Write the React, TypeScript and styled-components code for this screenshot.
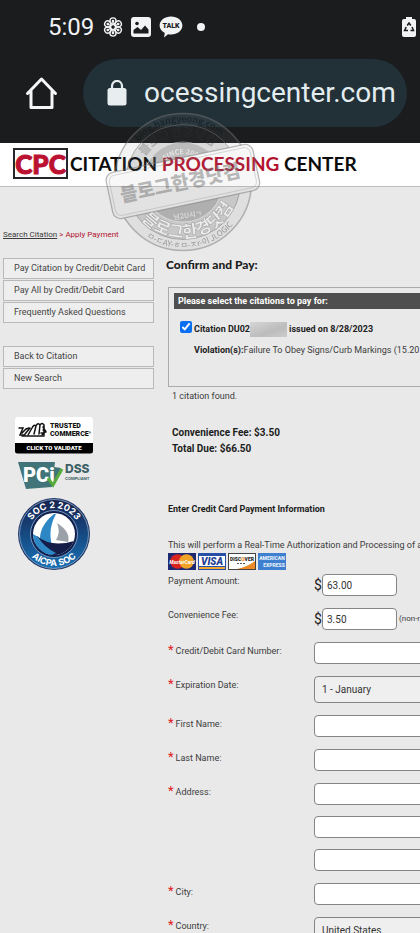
import React from "react";
import styled, { createGlobalStyle, css } from "styled-components";

const GlobalStyle = createGlobalStyle`
  *, *::before, *::after { box-sizing: border-box; }
  body {
    margin: 0;
    background: #e9e9e9;
    color: #3c3c3c;
    font-family: Roboto, "Noto Sans", sans-serif;
    font-size: 9px;
    line-height: 14px;
  }
`;

const Screen = styled.div`
  position: relative;
  height: 100vh;
  overflow: hidden;
`;

/* ---------- phone and browser bars ---------- */

const Chrome = styled.div`
  background: #1b1c1e;
  color: #f1f3f4;
`;

const StatusBar = styled.div`
  display: flex;
  align-items: center;
  height: 54px;
  padding: 0 4px 0 48px;
`;

const Clock = styled.time`
  margin-right: 9px;
  font-size: 24px;
  line-height: 28px;
`;

const StatusIcons = styled.div`
  display: flex;
  align-items: center;
  gap: 8px;
  flex: 1;
`;

const MoreDot = styled.span`
  width: 8px;
  height: 8px;
  margin-left: 6px;
  border-radius: 50%;
  background: #f1f3f4;
`;

const AddressRow = styled.div`
  display: flex;
  align-items: center;
  gap: 25px;
  padding: 5px 13px 16px 25px;
`;

const HomeButton = styled.button`
  display: flex;
  flex: none;
  padding: 0;
  border: 0;
  background: none;
`;

const AddressPill = styled.div`
  display: flex;
  align-items: center;
  flex: 1;
  min-width: 0;
  height: 68px;
  gap: 17px;
  padding-left: 24px;
  border-radius: 34px;
  background: #223038;
  overflow: hidden;
`;

const AddressText = styled.span`
  font-size: 28px;
  line-height: 36px;
  color: #e3edf0;
  white-space: nowrap;
`;

/* ---------- site header ---------- */

const SiteHeader = styled.header`
  display: flex;
  align-items: center;
  gap: 2px;
  height: 44px;
  padding: 0 0 2px 13px;
  border-bottom: 1px solid #bdbdbd;
  background: #fff;
`;

const LogoBox = styled.span`
  display: flex;
  align-items: center;
  justify-content: center;
  width: 55px;
  height: 31px;
  border: 2px solid #26262b;
  color: #bb1231;
  font: 900 26px/28px Lato, sans-serif;
  -webkit-text-stroke: 1px #bb1231;
`;

const Brand = styled.span`
  color: #0c0c0c;
  font: 700 19px/24px Lato, sans-serif;
  white-space: nowrap;
  em { font-style: normal; color: #b3122e; }
`;

/* ---------- page body ---------- */

const Breadcrumb = styled.nav`
  padding: 41px 0 15px 3px;
  font-size: 8px;
  color: #b3122e;
  a { color: #3c3c3c; }
`;

const Columns = styled.div`
  display: flex;
  align-items: flex-start;
  gap: 12px;
  padding-left: 3px;
`;

const Sidebar = styled.aside`
  flex: none;
  width: 151px;
  padding-top: 1px;
`;

const NavGroup = styled.nav`
  display: flex;
  flex-direction: column;
  gap: 1px;
  margin-bottom: 23px;
`;

const NavLink = styled.a`
  height: 21px;
  padding: 0 10px;
  border: 1px solid #b9b9b9;
  background: #eeeeee;
  color: #444;
  line-height: 19px;
  text-decoration: none;
  white-space: nowrap;
`;

const Badges = styled.div`
  display: flex;
  flex-direction: column;
  align-items: flex-start;
  gap: 7px;
  padding: 5px 0 0 11px;
  svg { display: block; }
`;

const Main = styled.main`
  flex: 1 0 420px;
`;

const Title = styled.h1`
  margin: 0 0 14px;
  color: #1c1c1c;
  font: 900 12px/16px Lato, sans-serif;
`;

const CitationBox = styled.section`
  height: 100px;
  margin-left: 2px;
  padding: 5px;
  border: 1px solid #ababab;
`;

const BoxHeading = styled.h2`
  margin: 0 0 12px;
  padding: 0 4px;
  background: #4f4f4f;
  color: #fff;
  font-size: 9px;
  line-height: 16px;
`;

const CitationLine = styled.label`
  display: flex;
  align-items: center;
  height: 16px;
  padding-left: 6px;
  color: #222;
  font-weight: 700;
  white-space: nowrap;
`;

const Tick = styled.input`
  width: 12px;
  height: 12px;
  margin: 0 2px 4px 0;
  accent-color: #0b6ff2;
`;

const Redacted = styled.span`
  width: 37px;
  height: 15px;
  margin-right: 2px;
  background: linear-gradient(160deg, #d6d6d6, #bcbcbc 60%, #cccccc);
`;

const Violation = styled.p`
  margin: 6px 0 0 20px;
  white-space: nowrap;
  b { color: #222; }
`;

const Found = styled.p`
  margin: 2px 0 0 6px;
`;

const Totals = styled.div`
  margin: 22px 0 0 6px;
  color: #1c1c1c;
  font-size: 10px;
  font-weight: 700;
  line-height: 16px;
`;

const Subtitle = styled.h2`
  margin: 45px 0 22px 2px;
  color: #1c1c1c;
  font-size: 9px;
  line-height: 14px;
`;

const Notice = styled.p`
  margin: 0 0 1px 2px;
  white-space: nowrap;
`;

const Cards = styled.div`
  display: flex;
  gap: 2px;
  height: 17px;
  margin: 0 0 4px 2px;
`;

const Form = styled.form`
  display: flex;
  flex-direction: column;
  gap: 12px;
  margin-left: 2px;
`;

const Row = styled.div`
  display: grid;
  grid-template-columns: 146px 1fr;
  align-items: start;
`;

const Label = styled.label<{ $required?: boolean }>`
  white-space: nowrap;
  ${(p) =>
    p.$required &&
    css`
      padding-top: 2px;
      &::before {
        content: "*";
        margin-right: 2px;
        color: #e02020;
        font-size: 13px;
        line-height: 12px;
      }
    `}
`;

const controlStyle = css`
  border: 1px solid #858585;
  border-radius: 4px;
  color: #333;
  font: 10px/14px Roboto, sans-serif;
`;

const Field = styled.input<{ $amount?: boolean }>`
  ${controlStyle}
  height: 22px;
  width: ${(p) => (p.$amount ? "75px" : "100%")};
  padding: 0 4px;
  background: #fff;
`;

const Select = styled.select`
  ${controlStyle}
  appearance: none;
  width: 100%;
  height: 27px;
  padding: 0 7px;
  background: #efefef;
`;

const Money = styled.div`
  display: flex;
  align-items: center;
  color: #222;
`;

const Dollar = styled.span`
  width: 8px;
  font-size: 14px;
  line-height: 20px;
`;

const Hint = styled.span`
  margin-left: 2px;
  font-size: 8px;
  color: #3c3c3c;
  white-space: nowrap;
`;

const Lines = styled.div`
  display: flex;
  flex-direction: column;
  gap: 11px;
`;

/* ---------- drawings ---------- */

const Stamp = styled.svg`
  position: absolute;
  left: 103px;
  top: 110px;
  pointer-events: none;
`;

const FlowerIcon = () => (
  <svg width="20" height="20" viewBox="-10 -10 20 20" fill="none" stroke="#f1f3f4" strokeWidth="1.4">
    {[0, 60, 120, 180, 240, 300].map((a) => (
      <g key={a} transform={`rotate(${a})`}>
        <circle cx="0" cy="-6" r="3.1" />
        <path d="M0 -2V-6" />
        <circle cx="0" cy="-6" r="0.6" />
      </g>
    ))}
    <circle r="2.4" />
  </svg>
);

const PictureIcon = () => (
  <svg width="20" height="20" viewBox="0 0 20 20">
    <rect width="20" height="20" rx="3" fill="#f1f3f4" />
    <circle cx="6" cy="6.5" r="1.8" fill="#1b1c1e" />
    <path d="M2.5 16.5V13l4-3 3.5 3L14 8.5l3.5 4v4z" fill="#1b1c1e" />
  </svg>
);

const TalkIcon = () => (
  <svg width="24" height="22" viewBox="0 0 24 22">
    <path d="M12 0.5c6.4 0 11.4 3.9 11.4 9s-5 9-11.4 9c-1 0-2-.1-3-.3L5 21.5l.8-4.5C2.6 15.4.6 12.7.6 9.5c0-5.1 5-9 11.4-9z" fill="#f1f3f4" />
    <text x="12" y="12" textAnchor="middle" fontFamily="Roboto, sans-serif" fontWeight="900" fontSize="7" fill="#1b1c1e">TALK</text>
  </svg>
);

const BatteryIcon = () => (
  <svg width="14" height="20" viewBox="0 0 14 20">
    <path d="M4 0h6v2h2a2 2 0 0 1 2 2v14a2 2 0 0 1-2 2H2a2 2 0 0 1-2-2V4a2 2 0 0 1 2-2h2z" fill="#f1f3f4" />
    <g fill="none" stroke="#1b1c1e" strokeWidth="1.5">
      <path d="M5.2 8.500L7 6l1.800 2.500" />
      <path d="M10 10l1.500 3.500H8.500" />
      <path d="M6 13.500H2.600L4.200 10" />
    </g>
  </svg>
);

const HomeIcon = () => (
  <svg width="33" height="34" viewBox="0 0 33 34" fill="none" stroke="#f4f6f7" strokeWidth="3">
    <path d="M2.500 17.500L16.500 3l14 14.500M6 15v16.500h21V15" strokeLinejoin="round" strokeLinecap="round" />
  </svg>
);

const LockIcon = () => (
  <svg width="20" height="26" viewBox="0 0 20 26">
    <rect x="0.5" y="8" width="19" height="17.5" rx="2.5" fill="#e8eef0" />
    <path d="M5 9V6a5 5 0 0 1 10 0v3" fill="none" stroke="#e8eef0" strokeWidth="2.2" />
  </svg>
);

const TrustedBadge = () => (
  <svg width="80" height="37" viewBox="0 0 80 37" role="img" aria-label="Trusted Commerce, click to validate">
    <rect x="1" width="78" height="36" rx="2.5" fill="#fff" />
    <path d="M1 26h78v8a2.500 2.500 0 0 1-2.500 2.500h-73A2.500 2.500 0 0 1 1 34z" fill="#000" />
    <g fill="none" stroke="#111" strokeWidth="1.5" strokeLinecap="round">
      <path d="M5 11h4l-3 7h5M8 16l4-4 3-1M11 17l5-6M14 18l4-7q2-4 4-2l-2 8M22 9q2-4 4-1l-1 9M26 8q2-3 4 0l0 7M29 10l3 5M27 16h3M28 18l3-3M29 13h1v5" />
      <path d="M8 19h22" strokeDasharray="2 1" />
    </g>
    <g fontFamily="Roboto, sans-serif" fontWeight="900">
      <text x="36" y="11" fontSize="7" fill="#111">TRUSTED</text>
      <text x="36" y="19" fontSize="7" fill="#111">COMMERCE<tspan fontSize="3" dy="-2">®</tspan></text>
      <text x="40" y="33" fontSize="6" fill="#fff" textAnchor="middle">CLICK TO VALIDATE</text>
    </g>
  </svg>
);

const PciBadge = () => (
  <svg width="80" height="29" viewBox="-2 0 80 29" role="img" aria-label="PCI DSS compliant">
    <path d="M2 1h37l-3 25-26 2z" fill="#407478" />
    <path d="M38 6l7 1-6 12-4 3z" fill="#407478" />
    <text x="7" y="21" fontFamily="Roboto, sans-serif" fontWeight="900" fontSize="20" fill="#fff">PCi</text>
    <path d="M32 17l5 7L46 8" fill="none" stroke="#56ab3c" strokeWidth="3" />
    <text x="49" y="12" fontFamily="Inter, sans-serif" fontWeight="800" fontSize="12" fill="#3d6266">DSS</text>
    <text x="49" y="19" fontFamily="Inter, sans-serif" fontWeight="700" fontSize="4" fill="#3d6266">COMPLIANT</text>
  </svg>
);

const SocBadge = () => (
  <svg width="80" height="74" viewBox="-40 -37 80 74" role="img" aria-label="SOC 2 2023 AICPA SOC">
    <defs>
      <linearGradient id="socRing" x1="0" y1="0" x2="0" y2="1">
        <stop offset="0" stopColor="#16224f" />
        <stop offset="1" stopColor="#1770b4" />
      </linearGradient>
      <path id="socTop" d="M-26 0A26 26 0 0 1 26 0" />
      <path id="socBottom" d="M-32 0A32 32 0 0 0 32 0" />
      <clipPath id="socDisc"><circle r="21" /></clipPath>
    </defs>
    <circle r="36" fill="#1c3566" />
    <circle r="34.5" fill="url(#socRing)" stroke="#9fb9d6" strokeWidth="0.7" />
    <circle r="23.5" fill="#10204e" stroke="#8fb0d0" strokeWidth="0.8" />
    <circle r="21" fill="#fff" />
    <g clipPath="url(#socDisc)">
      <path d="M0-20Q-15-8-14 7q5 8 14 10Q-8-2 2-20z" fill="#2d87c5" />
      <path d="M3-11Q17-2 14 8L2 6Q7-2 3-11z" fill="#9aa1a8" />
      <path d="M-17 2Q-3 14 20 7L18 24h-40z" fill="#141d47" />
      <path d="M-21 0l5 3Q-10 13 2 19l-10 5-13-8z" fill="#2d87c5" />
    </g>
    <g fontFamily="Inter, sans-serif" fontWeight="700" fontSize="9" fill="#fff" textAnchor="middle">
      <text><textPath href="#socTop" startOffset="50%">SOC 2 2023</textPath></text>
      <text><textPath href="#socBottom" startOffset="50%">AICPA SOC</textPath></text>
    </g>
  </svg>
);

const CardArt = ({ kind }: { kind: "mastercard" | "visa" | "discover" | "amex" }) => (
  <svg width="28" height="17" viewBox="0 0 28 17" role="img" aria-label={kind}>
    {kind === "mastercard" && (
      <>
        <rect width="28" height="17" fill="#1d2a72" />
        <circle cx="9.5" cy="8.5" r="7.3" fill="#d8241f" />
        <circle cx="18.5" cy="8.5" r="7.3" fill="#f2a227" />
        <text x="14" y="10.5" textAnchor="middle" fontFamily="Roboto, sans-serif" fontWeight="700" fontStyle="italic" fontSize="5" fill="#fff">MasterCard</text>
      </>
    )}
    {kind === "visa" && (
      <>
        <rect width="28" height="17" fill="#2a4fa6" />
        <rect x="1" y="3" width="26" height="10" fill="#fff" />
        <rect x="1" y="14" width="26" height="2" fill="#f0aa33" />
        <text x="14" y="12" textAnchor="middle" fontFamily="Roboto, sans-serif" fontWeight="900" fontStyle="italic" fontSize="10" fill="#1f3f94">VISA</text>
      </>
    )}
    {kind === "discover" && (
      <>
        <rect x="0.5" y="0.5" width="27" height="16" fill="#fff" stroke="#444" />
        <path d="M27 8Q19 14 9 16h18z" fill="#ee8a26" />
        <text x="14" y="8" textAnchor="middle" fontFamily="Roboto, sans-serif" fontWeight="900" fontSize="5" fill="#222">DISC<tspan fill="#ee8a26">O</tspan>VER</text>
        <path d="M9 10.500h9" stroke="#555" strokeDasharray="2 1" />
      </>
    )}
    {kind === "amex" && (
      <>
        <rect width="28" height="17" fill="#3f7fcf" />
        <g fontFamily="Roboto, sans-serif" fontWeight="900" fontSize="5" fill="#e3effb">
          <text x="14" y="7" textAnchor="middle">AMERICAN</text>
          <text x="16" y="14" textAnchor="middle">EXPRESS</text>
        </g>
      </>
    )}
  </svg>
);

const StampArt = () => (
  <Stamp width="160" height="146" viewBox="-80 -72 160 146" aria-hidden="true">
    <defs>
      <path id="arcTop" d="M-60 0A60 60 0 0 1 60 0" />
      <path id="arcInner" d="M-46 0A46 46 0 0 1 46 0" />
      <path id="arcSince" d="M-28 0A28 28 0 0 1 28 0" />
      <path id="arcName" d="M-56 0A56 56 0 0 0 56 0" />
      <path id="arcBottom" d="M-66 0A66 66 0 0 0 66 0" />
      <mask id="behindPlate">
        <rect x="-80" y="-80" width="160" height="160" fill="#fff" />
        <rect x="-75" y="-24" width="150" height="47" rx="8" fill="#000" transform="rotate(-12)" />
      </mask>
    </defs>
    <g mask="url(#behindPlate)" fontFamily='"Noto Sans CJK KR", sans-serif' textAnchor="middle">
      <circle r="68.5" fill="#8a8a8a" fillOpacity="0.1" stroke="#777" strokeOpacity="0.5" strokeWidth="1.5" />
      <circle r="57.5" fill="#000" fillOpacity="0.1" stroke="#777" strokeOpacity="0.5" />
      <circle r="40" fill="#777" fillOpacity="0.3" stroke="#eee" strokeOpacity="0.5" />
      <g transform="rotate(-8)">
        <text fontSize="9" fontWeight="500" fill="#10191d" fillOpacity="0.7">
          <textPath href="#arcTop" startOffset="52%">blog.hangyeong.com</textPath>
        </text>
        <text fontSize="12" fontWeight="900" fill="#333" fillOpacity="0.25">
          <textPath href="#arcInner" startOffset="50%">블로그한경닷컴</textPath>
        </text>
        <text fontSize="7" fontWeight="700" fill="#fff" fillOpacity="0.6">
          <textPath href="#arcSince" startOffset="54%">SINCE 2009</textPath>
        </text>
        <text fontSize="17" fontWeight="900" fill="#ececec" stroke="#aaa" strokeWidth="0.6">
          <textPath href="#arcName" startOffset="50%">블로그한경닷컴</textPath>
        </text>
        <text fontSize="8" fill="#777" fillOpacity="0.7">
          <textPath href="#arcBottom" startOffset="50%">ㅁ-ㄷAY-ㅎㅁ-ㅈr-이 JLOGIC</textPath>
        </text>
        <text x="0" y="36" fontSize="7" fontWeight="700" fill="#eee" fillOpacity="0.6">님2U시ㄱ</text>
      </g>
    </g>
    <g transform="rotate(-12)">
      <rect x="-75" y="-24" width="150" height="47" rx="8" fill="#999" fillOpacity="0.08" stroke="#777" strokeOpacity="0.5" strokeWidth="1.3" />
      <rect x="-72" y="-21" width="144" height="41" rx="6" fill="none" stroke="#888" strokeOpacity="0.3" />
      <text x="-3" y="7" textAnchor="middle" fontFamily='"Noto Sans CJK KR", sans-serif' fontWeight="900" fontSize="19" fill="#777" fillOpacity="0.5">블로그한경닷컴</text>
    </g>
  </Stamp>
);

const navGroups = [
  ["Pay Citation by Credit/Debit Card", "Pay All by Credit/Debit Card", "Frequently Asked Questions"],
  ["Back to Citation", "New Search"],
];

export default function App() {
  return (
    <Screen>
      <GlobalStyle />
      <Chrome>
        <StatusBar>
          <Clock>5:09</Clock>
          <StatusIcons>
            <FlowerIcon />
            <PictureIcon />
            <TalkIcon />
            <MoreDot />
          </StatusIcons>
          <BatteryIcon />
        </StatusBar>
        <AddressRow>
          <HomeButton type="button" aria-label="Home"><HomeIcon /></HomeButton>
          <AddressPill>
            <LockIcon />
            <AddressText>ocessingcenter.com</AddressText>
          </AddressPill>
        </AddressRow>
      </Chrome>

      <SiteHeader>
        <LogoBox>CPC</LogoBox>
        <Brand>CITATION <em>PROCESSING</em> CENTER</Brand>
      </SiteHeader>

      <Breadcrumb aria-label="Breadcrumb">
        <a href="#search">Search Citation</a> &gt; Apply Payment
      </Breadcrumb>

      <Columns>
        <Sidebar>
          {navGroups.map((items) => (
            <NavGroup key={items[0]}>
              {items.map((item) => (
                <NavLink key={item} href="#nav">{item}</NavLink>
              ))}
            </NavGroup>
          ))}
          <Badges>
            <TrustedBadge />
            <PciBadge />
            <SocBadge />
          </Badges>
        </Sidebar>

        <Main>
          <Title>Confirm and Pay:</Title>
          <CitationBox>
            <BoxHeading>Please select the citations to pay for:</BoxHeading>
            <CitationLine>
              <Tick type="checkbox" defaultChecked />
              Citation DU02<Redacted />issued on 8/28/2023
            </CitationLine>
            <Violation><b>Violation(s):</b>Failure To Obey Signs/Curb Markings (15.20</Violation>
          </CitationBox>
          <Found>1 citation found.</Found>
          <Totals>
            <div>Convenience Fee: $3.50</div>
            <div>Total Due: $66.50</div>
          </Totals>

          <Subtitle>Enter Credit Card Payment Information</Subtitle>
          <Notice>This will perform a Real-Time Authorization and Processing of a</Notice>
          <Cards>
            <CardArt kind="mastercard" />
            <CardArt kind="visa" />
            <CardArt kind="discover" />
            <CardArt kind="amex" />
          </Cards>

          <Form>
            <Row>
              <Label htmlFor="amount">Payment Amount:</Label>
              <Money><Dollar>$</Dollar><Field $amount id="amount" defaultValue="63.00" /></Money>
            </Row>
            <Row>
              <Label htmlFor="fee">Convenience Fee:</Label>
              <Money><Dollar>$</Dollar><Field $amount id="fee" defaultValue="3.50" /><Hint>(non-refundable)</Hint></Money>
            </Row>
            <Row>
              <Label $required htmlFor="card">Credit/Debit Card Number:</Label>
              <Field id="card" />
            </Row>
            <Row>
              <Label $required htmlFor="month">Expiration Date:</Label>
              <Select id="month"><option>1 - January</option></Select>
            </Row>
            <Row>
              <Label $required htmlFor="first">First Name:</Label>
              <Field id="first" />
            </Row>
            <Row>
              <Label $required htmlFor="last">Last Name:</Label>
              <Field id="last" />
            </Row>
            <Row>
              <Label $required htmlFor="address">Address:</Label>
              <Lines>
                <Field id="address" />
                <Field aria-label="Address line 2" />
                <Field aria-label="Address line 3" />
              </Lines>
            </Row>
            <Row>
              <Label $required htmlFor="city">City:</Label>
              <Field id="city" />
            </Row>
            <Row>
              <Label $required htmlFor="country">Country:</Label>
              <Select id="country"><option>United States</option></Select>
            </Row>
          </Form>
        </Main>
      </Columns>
      <StampArt />
    </Screen>
  );
}
